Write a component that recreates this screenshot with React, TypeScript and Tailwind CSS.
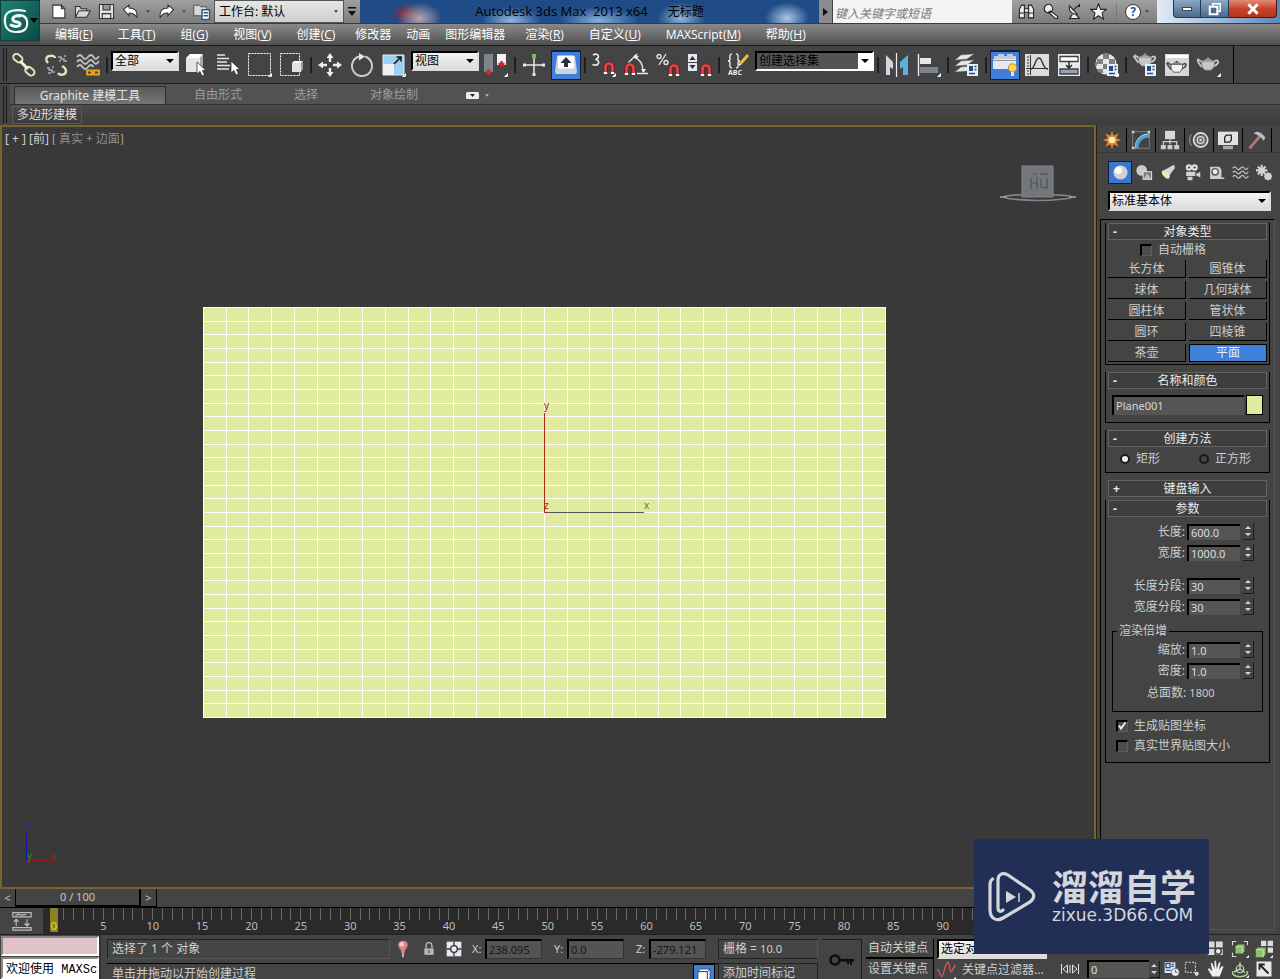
import type { ReactNode } from "react";

function Svg({ children, className = "size-6" }: { children: ReactNode; className?: string }) {
  return (
    <svg viewBox="0 0 24 24" fill="none" stroke="none" className={`shrink-0 ${className}`} aria-hidden="true">
      {children}
    </svg>
  );
}

const Corner = () => <path d="M24 20v3l-1 1h-3z" fill="#fff" />;

const Magnet = ({ x = 0, y = 0 }: { x?: number; y?: number }) => (
  <g transform={`translate(${x} ${y})`}>
    <path d="M2.500 13V6a3.500 3.500 0 0 1 7 0v7" stroke="#7d1518" strokeWidth="4.400" />
    <path d="M2.500 11V6a3.500 3.500 0 0 1 7 0v5" stroke="#e0474a" strokeWidth="2.600" />
    <path d="M.8 12h3.400M7.800 12h3.400" stroke="#fff" strokeWidth="2" />
  </g>
);

const Teapot = ({ fill = "#c4c8cb", stroke = "#8b9094" }: { fill?: string; stroke?: string }) => (
  <g fill={fill} stroke={stroke} strokeWidth="1">
    <path d="M6 10 2 7.5l-1 1L5.500 15M18 10c3-3 5-1 4 1s-3 3-5 3.500" fill="none" strokeWidth="1.8" stroke={fill === "#f3f3f3" ? stroke : fill} />
    <path d="M6 9h12c1 4 0 7-3 9H9C6 16 5 13 6 9z" />
    <path d="M7.500 9c1-2 8-2 9 0zM11 6h2v1.500h-2z" />
  </g>
);

const Dialog = () => (
  <g>
    <path d="M12 11h11v12H12z" fill="#e9eff7" />
    <path d="M14 13h4v5h-4z" fill="#244d86" />
    <path d="M19.500 13.500h2M19.500 16.500h2M14 20.500h6" stroke="#244d86" strokeWidth="1.400" />
  </g>
);

const Cursor = ({ x = 0, y = 0 }: { x?: number; y?: number }) => (
  <path transform={`translate(${x} ${y})`} d="M0 0v12l3-2.500 2 4.500 2.500-1-2-4.500H9z" fill="#fff" stroke="#333" strokeWidth=".8" />
);

const icons = {
  link: (
    <g stroke="#e8e0bd" strokeWidth="2">
      <rect x="1" y="2" width="10" height="6.500" rx="3.200" transform="rotate(40 6 5)" />
      <rect x="13" y="15" width="10" height="6.500" rx="3.200" transform="rotate(40 18 18)" />
      <path d="m8 8 8 8" stroke="#f6f1d8" strokeWidth="3" />
    </g>
  ),
  unlink: (
    <g stroke="#e8e0bd" strokeWidth="2.400">
      <path d="M4 10C1 7 2 3 6 3c3-1 5 1 5 2M14 20c2 3 8 2 8-2 0-3-2-4-4-5" />
      <path d="M14 4h3v2h3v2h3M15 8h2M20 3h2M3 15h2v2h3v2h3M4 20h3M8 14h2" stroke="#a9adb0" strokeWidth="1.500" />
    </g>
  ),
  bind: (
    <g>
      <path d="M1 4q3-4 5.500 0t5.500 0 5.500 0T23 3M1 9q3-4 5.500 0T12 9t5.500 0T23 8M1 14q3-4 5.500 0T12 14t5.500 0" stroke="#b9c0c5" strokeWidth="1.800" />
      <path d="M11 17.500h5v4h-5zM18 17.500h5v4h-5zM15 19.500h4" stroke="#f0a31f" strokeWidth="1.800" />
    </g>
  ),
  select: (
    <g>
      <path d="m2 5 4-4h13l-3 4z" fill="#fff" />
      <path d="M2 5h14v14H2z" fill="#e2e5e7" />
      <path d="m16 5 3-4v13l-3 5z" fill="#a5aaae" />
      <Cursor x={13} y={9} />
    </g>
  ),
  byName: (
    <g>
      <path d="M1 2h8M1 5.500h12M1 9h10M1 12.500h13M1 16h12" stroke="#e6e6e6" strokeWidth="1.300" />
      <Cursor x={15} y={8} />
    </g>
  ),
  rect: (
    <g>
      <path d="M.5.5h22v22H.5z" stroke="#fff" strokeDasharray="2 1" />
      <Corner />
    </g>
  ),
  window: (
    <g>
      <path d="M.5.5h19v22H.5z" stroke="#fff" strokeDasharray="2 1" />
      <path d="m12 10 2-2h9l-2 2z" fill="#fff" />
      <path d="M12 10h9v9h-9z" fill="#dfe3e6" />
      <path d="m21 10 2-2v8l-2 3z" fill="#9aa0a5" />
    </g>
  ),
  move: (
    <path
      d="m12 0 3.500 5h-2.300v4h-2.400V5H8.500zM12 24l-3.500-5h2.300v-4h2.400v4h2.300zM0 12l5-3.500v2.300h4v2.400H5v2.300zM24 12l-5 3.500v-2.300h-4v-2.400h4V8.500z"
      fill="#eee"
    />
  ),
  rotate: (
    <g>
      <path d="M9 3.500A10 10 0 1 0 15 3.500" stroke="#c9cccf" strokeWidth="2" />
      <path d="m9 0 6 3.500-6 4z" fill="#e8e8e8" />
    </g>
  ),
  scale: (
    <g>
      <path d="M1 2h21v20H1z" fill="#9cd0f0" />
      <path d="M1 2h21v20H1z" stroke="#d9effc" />
      <path d="M1 11h11v11H1z" fill="#eef0f2" />
      <path d="m12 11 7-7M14.500 4H19v4.500" stroke="#111" strokeWidth="1.500" />
      <Corner />
    </g>
  ),
  pivot: (
    <g>
      <path d="M0 1h9v18H0z" fill="#7e868d" />
      <path d="M13 1h9v11h-9z" fill="#f2f2f2" />
      <path d="M1.500 19h6M4.500 16v6M14.500 11h6M17.500 8v6" stroke="#d5252b" strokeWidth="2.400" />
      <Corner />
    </g>
  ),
  manipulate: (
    <g>
      <path d="M12 4v17M3 12h18" stroke="#e6e6e6" strokeWidth="1.500" />
      <path d="M1 10.500h3v3H1zM20 10.500h3v3h-3zM10.500 20h3v3h-3z" fill="#e6e6e6" />
      <path d="M10 1h4v4h-4z" fill="#72c04d" />
    </g>
  ),
  keyboard: (
    <g>
      <path d="M3 3h18l2 16-1 2H2l-1-2z" fill="#ccd3da" />
      <path d="M4 2.500h16v13H4z" fill="#fff" />
      <path d="m12 4 5.500 6H14v4h-4v-4H6.500z" fill="#26303c" />
    </g>
  ),
  snap: (
    <g>
      <path d="M1 2c5-3 8 3 2.500 4.500C9 7 7 14 .5 11.500" stroke="#eee" strokeWidth="1.600" />
      <Magnet x={11} y={8} />
      <Corner />
    </g>
  ),
  angle: (
    <g>
      <path d="M4 10 13 1M13 20.500h11M10 4c6 2 9 8 9 15" stroke="#e6e6e6" strokeWidth="1.400" />
      <path d="m10 2 5 1-3 3zM17 16h5l-2.500 4z" fill="#eee" />
      <Magnet x={0} y={9} />
    </g>
  ),
  percent: (
    <g>
      <circle cx="3" cy="3.500" r="2" stroke="#e6e6e6" strokeWidth="1.400" />
      <circle cx="10" cy="9.500" r="2" stroke="#e6e6e6" strokeWidth="1.400" />
      <path d="M10 1 3 12" stroke="#e6e6e6" strokeWidth="1.300" />
      <Magnet x={12} y={10} />
    </g>
  ),
  spinner: (
    <g>
      <path d="M0 1h9v8H0zM0 10h9v8H0z" fill="#e4e9ef" />
      <path d="m4.500 3 3 4h-6zM4.500 16l3-4h-6z" fill="#26303c" />
      <Magnet x={12} y={10} />
    </g>
  ),
  named: (
    <g>
      <path d="M6 1C3 1 4 4 4 6s-2 2-2 2 2 0 2 2-1 5 2 5M10 1c3 0 2 3 2 5s2 2 2 2-2 0-2 2 1 5-2 5" stroke="#e6e6e6" strokeWidth="1.400" />
      <path d="m22 2-8 9" stroke="#eebb3a" strokeWidth="3" />
      <path d="m14 10-2 3 3-1z" fill="#fff" />
      <text x="2" y="22" fill="#eee" fontSize="7" fontWeight="700">ABC</text>
    </g>
  ),
  mirror: (
    <g>
      <path d="m1 2 7 7v7l-3-2v8H1z" fill="#cfd8e0" />
      <path d="m23 2-8 7v7l3-2v8h5z" fill="#5fb0e0" />
      <path d="M11.500 0v24" stroke="#eee" strokeWidth="1.200" />
    </g>
  ),
  align: (
    <g>
      <path d="M1.500 1v22" stroke="#eee" strokeWidth="1.400" />
      <path d="M3 5h11v6H3z" fill="#e4e7ea" />
      <path d="M3 14h18v6H3z" fill="#7b8590" />
      <Corner />
    </g>
  ),
  layers: (
    <g>
      <path d="m6 2 13-1-7 5-12 1zM6 8l13-1-7 5-12 1zM6 14l13-1-7 5-12 1z" fill="#e3e6e8" stroke="#777" strokeWidth=".5" />
      <Dialog />
    </g>
  ),
  ribbon: (
    <g>
      <path d="M1 6V3h4V1h6v2h3V1h6v2h3v3z" fill="#c3ccd5" />
      <path d="M0 6h23v10H0z" fill="#e5eaef" />
      <path d="M0 7.500h23" stroke="#8995a1" />
      <circle cx="19.500" cy="15" r="4.200" fill="#ffd75c" stroke="#c98412" />
      <path d="M18 19h3v4h-3z" fill="#f3e3b5" />
    </g>
  ),
  curve: (
    <g>
      <path d="M0 1h24v22H0z" fill="#dadcde" />
      <path d="M5.500 2v20M1 15.500h22M2 4h2M2 7h2M2 10h2M2 13h2M2 18h2M2 21h2" stroke="#333" />
      <path d="M6 16c4 0 4-11 8-11s3 11 9 11" stroke="#333" strokeWidth="1.400" />
    </g>
  ),
  schematic: (
    <g>
      <path d="M1 1h22v22H1z" fill="#e8eaec" />
      <path d="M3 3.500h18v5H3z" fill="#fff" stroke="#3a4047" strokeWidth="1.300" />
      <path d="M3 16h18v5H3z" fill="#98a3ad" stroke="#3a4047" strokeWidth="1.300" />
      <path d="M12 9v6M9 12l3 3 3-3" stroke="#222" strokeWidth="1.400" />
    </g>
  ),
  material: (
    <g>
      <circle cx="11" cy="11" r="10.500" fill="#e3e5e7" />
      <path d="M8 1h6v5H8zM2 6h6v5H2zM14 6h6v5h-6zM8 11h6v5H8zM2 16h6v4H5zM0 9h2v4H0z" fill="#7b8186" />
      <Dialog />
      <Corner />
    </g>
  ),
  renderSetup: (
    <g>
      <g transform="translate(0 -5)"><Teapot /></g>
      <Dialog />
    </g>
  ),
  frame: (
    <g>
      <path d="M0 1h24v22H0z" fill="#d5d7d9" />
      <path d="M1 2h22v3H1z" fill="#fff" />
      <g transform="translate(1 3) scale(.9)"><Teapot fill="#f3f3f3" stroke="#4a4f53" /></g>
    </g>
  ),
  render: (
    <g>
      <g transform="translate(-1 -1)"><Teapot /></g>
      <Corner />
    </g>
  ),
  waves: <path d="M1 6q3-4 5.500 0t5.500 0 5.500 0T23 5M1 12q3-4 5.500 0t5.500 0 5.500 0 5.500-1M1 18q3-4 5.500 0t5.500 0 5.500 0 5.500-1" stroke="#b9c0c5" strokeWidth="1.800" />,
};

type IconName = keyof typeof icons;

function Tool({ icon, label, active }: { icon: IconName; label: string; active?: boolean }) {
  return (
    <button type="button" aria-label={label} className="flex w-8 shrink-0 items-center justify-center">
      <span className={active ? "flex size-[30px] items-center justify-center border border-t-2 border-[#15203a] bg-[#3f7edb]" : "flex size-[30px] items-center justify-center"}>
        <Svg>{icons[icon]}</Svg>
      </span>
    </button>
  );
}

const Sep = () => <span className="mx-0.5 h-4 w-0.5 shrink-0 bg-[#1f1f1f]" />;

function Select({ label, value, className, dark }: { label: string; value: string; className: string; dark?: boolean }) {
  return (
    <span className={`relative mx-px flex shrink-0 ${className}`}>
      <select
        aria-label={label}
        className={
          dark
            ? "w-full appearance-none border-2 border-t-black border-l-black border-r-white border-b-white bg-[#545454] pl-0.5 leading-4 text-black"
            : "w-full appearance-none border-2 border-t-black border-l-black border-r-[#ddd] border-b-[#ddd] bg-linear-to-b from-[#f4f4f4] to-[#dcdcdc] pl-0.5 leading-4 text-black"
        }
      >
        <option>{value}</option>
      </select>
      <span className={`pointer-events-none absolute inset-y-0.5 right-0.5 flex w-3.5 items-center justify-center ${dark ? "bg-white" : ""}`}>
        <svg viewBox="0 0 8 4" className="h-1 w-2"><path d="M0 0h8L4 4z" fill="#000" /></svg>
      </span>
    </span>
  );
}

const quick = [
  { label: "新建", d: "M4 3h12l5 5v13H4zM16 3v5h5", fill: "#fff" },
  { label: "打开", d: "M2 20V5h6l2 3h8v3M2 20l5-9h16l-5 9z", fill: "#d5d8da" },
  { label: "保存", d: "M2 2h20v20H2zM7 2v8h10V2M6 22v-7h12v7", fill: "#dfe3e8" },
  { label: "撤销", d: "M2 9l8-6v4c8 0 12 4 11 14-2-5-5-7-11-7v4z", fill: "#fff" },
  { label: "重做", d: "M22 9l-8-6v4C6 7 2 11 3 21c2-5 5-7 11-7v4z", fill: "#fff" },
];

function TitleBar() {
  return (
    <div className="flex h-6 items-stretch border-b border-[#3a3a3a] bg-linear-to-b from-[#a0a0a0] to-[#7d7d7d]">
      <div className="flex items-center pl-1.5">
        {quick.map((q, i) => (
          <span key={q.label} className="flex items-center">
            <button type="button" aria-label={q.label} className="flex w-6 items-center justify-center">
              <Svg className="size-[17px]"><path d={q.d} fill={q.fill} stroke="#333" strokeWidth="1.500" /></Svg>
            </button>
            {i > 2 && <svg viewBox="0 0 8 5" className="mx-1 h-[3px] w-1"><path d="M0 0h8L4 5z" fill="#444" /></svg>}
          </span>
        ))}
        <button type="button" aria-label="项目文件夹" className="flex w-6 items-center justify-center">
          <Svg className="size-[18px]">
            <path d="M1 3h7l2 2h8v12H1z" fill="#d5d8da" stroke="#333" />
            <path d="M12 9h10v13H12z" fill="#fff" stroke="#2d5590" strokeWidth="2" />
            <path d="M14 13h6M14 17h6" stroke="#2d5590" strokeWidth="2" />
          </Svg>
        </button>
      </div>
      <span className="relative flex w-[130px] shrink-0">
        <select aria-label="工作台" className="w-full appearance-none border border-[#555] bg-linear-to-b from-[#e6e6e6] to-[#cfcfcf] pl-1 text-black">
          <option>工作台: 默认</option>
        </select>
        <svg viewBox="0 0 8 5" className="pointer-events-none absolute top-2.5 right-1.5 h-[3px] w-1"><path d="M0 0h8L4 5z" fill="#333" /></svg>
      </span>
      <button type="button" aria-label="自定义快速访问工具栏" className="flex w-4 shrink-0 items-center justify-center">
        <svg viewBox="0 0 8 9" className="h-[9px] w-2"><path d="M0 0h8v1.500H0zM0 4h8L4 9z" fill="#111" /></svg>
      </button>
      <h1 className="flex flex-1 items-center justify-center overflow-hidden bg-[radial-gradient(ellipse_22px_16px_at_13%_80%,#b9a4ae,transparent),radial-gradient(ellipse_16px_10px_at_10%_60%,#8a2b33,transparent),radial-gradient(ellipse_30px_14px_at_33%_90%,#93b6dd,transparent),radial-gradient(ellipse_40px_14px_at_52%_90%,#86aedb,transparent),radial-gradient(ellipse_24px_16px_at_70%_80%,#8fb5d8,transparent),radial-gradient(ellipse_22px_16px_at_93%_80%,#a9c6e6,transparent)] bg-[#1f4c87] font-['Open_Sans','Noto_Sans_CJK_SC',sans-serif] whitespace-pre text-black">
        <span className="text-[13px]">Autodesk 3ds Max  2013 x64</span>
        <span className="ml-5">无标题</span>
      </h1>
      <button type="button" aria-label="展开" className="flex w-3.5 shrink-0 items-center justify-center border-r border-[#444] bg-[#8b8b8b]">
        <svg viewBox="0 0 5 8" className="h-2 w-[5px]"><path d="M0 0v8l5-4z" fill="#111" /></svg>
      </button>
      <input aria-label="搜索" placeholder="键入关键字或短语" className="w-[179px] shrink-0 bg-[#f4f4f4] pt-1 pl-0.5 italic placeholder:text-[#777]" />
      <div className="flex shrink-0 items-center pr-1.5 pl-0.5">
        {infoIcons.map((i) => (
          <button key={i.label} type="button" aria-label={i.label} className="flex w-6 items-center justify-center">
            <Svg className="size-[17px]">{i.icon}</Svg>
          </button>
        ))}
        <span className="mx-1.5 h-4 w-px bg-[#777]" />
        <button type="button" aria-label="帮助" className="flex w-7 items-center justify-center gap-1">
          <span className="flex size-4 shrink-0 items-center justify-center rounded-full border border-[#333] bg-white text-[12px] leading-3 font-bold text-[#2455b5]">?</span>
          <svg viewBox="0 0 8 5" className="h-[3px] w-1"><path d="M0 0h8L4 5z" fill="#444" /></svg>
        </button>
      </div>
      <div className="flex shrink-0 items-start bg-linear-to-r from-[#e3ecf6] to-[#5c88b8] pr-[3px] pl-4">
        <button type="button" aria-label="最小化" className="flex h-[18px] w-7 items-center justify-center rounded-bl border border-t-0 border-[#26384e] bg-linear-to-b from-[#8ba8c6] to-[#4b6b8f]">
          <span className="h-1 w-2.5 border border-[#444] bg-white" />
        </button>
        <button type="button" aria-label="还原" className="flex h-[18px] w-7 items-center justify-center border border-t-0 border-l-0 border-[#26384e] bg-linear-to-b from-[#8ba8c6] to-[#4b6b8f]">
          <Svg className="size-3.5"><path d="M8 3h13v13H8z" stroke="#fff" strokeWidth="2.500" /><path d="M3 8h13v13H3z" fill="#4b6b8f" stroke="#fff" strokeWidth="3.500" /></Svg>
        </button>
        <button type="button" aria-label="关闭" className="flex h-[18px] w-12 items-center justify-center rounded-br border border-t-0 border-l-0 border-[#4a1710] bg-linear-to-b from-[#e08a77] via-[#c8432b] to-[#b8321c]">
          <Svg className="size-3.5"><path d="m4 4 16 16M20 4 4 20" stroke="#fff" strokeWidth="5" /></Svg>
        </button>
      </div>
    </div>
  );
}

const infoIcons = [
  { label: "搜索", icon: <path d="M2 21V9l3-6h4v18zM15 21V3h4l3 6v12zM9 8h6v5H9zM2 14h7M15 14h7" fill="#eee" stroke="#222" strokeWidth="1.500" /> },
  { label: "速博应用", icon: <path d="M8 2a6 6 0 1 1-2 11 6 6 0 0 1 2-11zM12 11l10 8v3h-3L9 13z" fill="#eee" stroke="#222" strokeWidth="1.500" /> },
  { label: "通讯中心", icon: <path d="M5 4c-2 7 4 13 11 12zM5 4l11 12M10 10l8-7M19 1v4h-4M9 16l-4 6h14l-5-6" fill="#eee" stroke="#222" strokeWidth="1.500" /> },
  { label: "收藏夹", icon: <path d="m12 1 3 8h8l-6 5 2 9-7-5-7 5 2-9-6-5h8z" fill="#f5f5f5" stroke="#222" strokeWidth="1.500" /> },
];

const menus = [
  ["编辑", "E"], ["工具", "T"], ["组", "G"], ["视图", "V"], ["创建", "C"], ["修改器"], ["动画"],
  ["图形编辑器"], ["渲染", "R"], ["自定义", "U"], ["MAXScript", "M"], ["帮助", "H"],
];

function Header() {
  return (
    <header className="flex h-[45px] shrink-0 bg-[#4a4a4a]">
      <button type="button" aria-label="应用程序" className="flex h-[41px] w-10 shrink-0 items-center border border-[#123f3a] bg-linear-to-br from-[#1d8276] to-[#0b4a46]">
        <svg viewBox="0 0 28 28" fill="none" stroke="#f2f7f6" strokeLinecap="round" className="ml-px size-7 shrink-0">
          <path d="M23 4C14 2 4 3 3 11c-1 9 3 14 11 14 9 0 12-4 11-11-1-5-6-7-11-5" strokeWidth="2.200" />
          <path d="M18 9c-4-1-8 1-7 4s7 1 7 4-6 3-9 1" strokeWidth="3" />
        </svg>
        <svg viewBox="0 0 8 5" className="h-[5px] w-2 shrink-0"><path d="M0 0h8L4 5z" fill="#000" /></svg>
      </button>
      <div className="min-w-0 flex-1">
        <TitleBar />
        <nav className="flex h-[21px] items-center gap-px bg-linear-to-b from-[#8a8a8a] to-[#505050] pl-[3px] font-['Open_Sans','Noto_Sans_CJK_SC',sans-serif] text-white">
          {menus.map(([name, key]) => (
            <button key={name} type="button" className={key ? "px-3" : "px-[7px]"}>
              {name}
              {key && <>(<u>{key}</u>)</>}
            </button>
          ))}
        </nav>
      </div>
    </header>
  );
}

function Toolbar() {
  return (
    <div className="h-[39px] shrink-0 border-y border-[#1c1c1c] bg-[#444]">
      <div className="flex h-full w-[1234px] items-center border-r border-black">
        <Grip className="mr-px" />
        <Tool icon="link" label="选择并链接" />
        <Tool icon="unlink" label="断开当前选择链接" />
        <Tool icon="bind" label="绑定到空间扭曲" />
        <Sep />
        <Select label="选择过滤器" value="全部" className="mb-2 h-5 w-[68px]" />
        <Tool icon="select" label="选择对象" />
        <Tool icon="byName" label="按名称选择" />
        <Tool icon="rect" label="矩形选择区域" />
        <Tool icon="window" label="窗口/交叉" />
        <Sep />
        <Tool icon="move" label="选择并移动" />
        <Tool icon="rotate" label="选择并旋转" />
        <Tool icon="scale" label="选择并缩放" />
        <Select label="参考坐标系" value="视图" className="mb-2 h-5 w-[68px]" />
        <Tool icon="pivot" label="使用轴点中心" />
        <Sep />
        <Tool icon="manipulate" label="选择并操纵" />
        <Tool icon="keyboard" label="键盘快捷键覆盖切换" active />
        <Sep />
        <Tool icon="snap" label="捕捉开关" />
        <Tool icon="angle" label="角度捕捉切换" />
        <Tool icon="percent" label="百分比捕捉切换" />
        <Tool icon="spinner" label="微调器捕捉切换" />
        <Sep />
        <Tool icon="named" label="编辑命名选择集" />
        <Select label="命名选择集" value="创建选择集" className="mb-2 h-5 w-[119px]" dark />
        <Sep />
        <Tool icon="mirror" label="镜像" />
        <Tool icon="align" label="对齐" />
        <Sep />
        <Tool icon="layers" label="层管理器" />
        <Sep />
        <Tool icon="ribbon" label="Graphite 建模工具" active />
        <Tool icon="curve" label="曲线编辑器" />
        <Tool icon="schematic" label="图解视图" />
        <Sep />
        <Tool icon="material" label="材质编辑器" />
        <Sep />
        <Tool icon="renderSetup" label="渲染设置" />
        <Tool icon="frame" label="渲染帧窗口" />
        <Tool icon="render" label="渲染产品" />
      </div>
    </div>
  );
}

const Grip = ({ className }: { className: string }) => (
  <span className={`my-0.5 ml-[3px] flex w-1 shrink-0 self-stretch border-x border-[#161616] ${className}`} />
);

function Ribbon() {
  return (
    <div className="flex h-[41px] shrink-0 bg-[#444]">
      <Grip className="mr-[3px]" />
      <div className="flex min-w-0 flex-1 flex-col">
        <div className="flex h-[21px] items-end border-b border-[#333] bg-[#525252] text-[#9c9c9c]">
          <button type="button" className="ml-1 h-[18px] w-[152px] border border-b-0 border-[#2d2d2d] bg-linear-to-b from-[#5a5a5a] to-[#757575] leading-4 text-[#e2e2e2]">
            Graphite 建模工具
          </button>
          <button type="button" className="ml-1 w-24 pb-px leading-4">自由形式</button>
          <button type="button" className="w-20 pb-px leading-4">选择</button>
          <button type="button" className="w-24 pb-px leading-4">对象绘制</button>
          <button type="button" aria-label="最小化功能区" className="ml-6 flex h-[18px] items-center gap-1.5">
            <svg viewBox="0 0 13 7" className="h-[7px] w-[13px]"><rect width="13" height="7" rx="1.500" fill="#eee" /><path d="M4 2h5L6.500 5z" fill="#222" /></svg>
            <svg viewBox="0 0 8 5" className="h-[3px] w-1"><path d="M0 0h8L4 5z" fill="#bbb" /></svg>
          </button>
        </div>
        <div className="flex flex-1 items-center bg-linear-to-b from-[#4b4b4b] to-[#3c3c3c]">
          <button type="button" className="ml-0.5 h-[18px] border border-[#5a5a5a] px-1 leading-4 text-[#dedede]">多边形建模</button>
        </div>
      </div>
    </div>
  );
}

function Plane() {
  const steps = Array.from({ length: 31 }, (_, i) => i);
  return (
    <svg viewBox="0 0 683 411" className="h-[411px] w-[683px] shrink-0">
      <rect width="683" height="411" fill="#e0eb9f" />
      <g fill="#fff">
        {steps.map((i) => (
          <path key={i} d={`M${Math.round((i * 682) / 30)} 0h1v411h-1zM0 ${Math.round((i * 410) / 30)}h683v1H0z`} />
        ))}
      </g>
      <path d="M341 205h100v1H341z" fill="#555" />
      <path d="M341 106h1v100h-1z" fill="#b32615" />
      <g fontSize="10">
        <text x="341" y="102" fill="#b32615">y</text>
        <text x="441" y="202" fill="#6b6f4c">x</text>
        <text x="341" y="202" fill="#b32615">z</text>
      </g>
    </svg>
  );
}

function Viewport() {
  return (
    <section aria-label="前视图" className="relative flex min-h-0 flex-1 items-center justify-center overflow-hidden border-2 border-[#766629] bg-[#393939] pt-[11px] pr-[7px]">
      <Plane />
      <div className="absolute top-1 left-[3px] flex gap-[3px] leading-4 text-[#d2d2d2]">
        <button type="button">[ + ]</button>
        <button type="button">[前]</button>
        <button type="button" className="font-['Liberation_Serif','Noto_Sans_CJK_SC',serif] font-light text-[#b0b0b0]">[ 真实 + 边面]</button>
      </div>
      <svg viewBox="0 0 76 40" className="absolute top-[37px] right-[18px] h-10 w-[76px]">
        <path d="M38 30.500c-18 0-34 1-34 2.500s18 3.500 34 3.500 34-2 34-3.500-16-2.500-34-2.500" fill="none" stroke="#85878a" strokeWidth="1.600" />
        <path d="M0 33h7M69 33h7" stroke="#a5a7aa" strokeWidth="1.500" />
        <rect x="22" y="2" width="31" height="31" fill="#73767b" stroke="#85888d" />
        <path d="M31 14v11M31 19h6M37 13v12M41 15v8l6 1v-10M33 10h4M40 10h8" stroke="#555a62" strokeWidth="1.500" fill="none" />
      </svg>
      <svg viewBox="0 0 44 48" className="absolute bottom-[22px] left-5 h-12 w-11 overflow-visible">
        <path d="M4 16h1v28H4z" fill="#1512a5" />
        <path d="M6 43h25v1H6z" fill="#961b1b" />
        <text x="4" y="13" fontSize="10" fill="#2a25c5">z</text>
        <text x="5" y="42" fontSize="10" fill="#1d8c1d">y</text>
        <text x="29" y="43" fontSize="10" fill="#a31c1c">x</text>
      </svg>
    </section>
  );
}

function Timeline() {
  return (
    <>
      <div className="flex h-[19px] shrink-0 border-b border-black bg-[#444] text-[11px] leading-4 text-[#c4c4c4]">
        <button type="button" className="w-4 border-r border-black text-center">&lt;</button>
        <button type="button" className="w-[125px] border-r-2 border-b-2 border-black">0 / 100</button>
        <button type="button" className="w-4 border-r border-b border-black text-center">&gt;</button>
      </div>
      <div className="flex h-[26px] shrink-0 bg-[#2a2a2a]">
        <button type="button" aria-label="打开迷你曲线编辑器" className="flex w-[43px] shrink-0 items-center justify-center bg-[#444]">
          <Svg className="size-5">
            <path d="M1 2h22v5H1zM1 20h22v3H1zM5 18v-7M2 13l3-3 3 3M18 10v7M15 15l3 3 3-3M4 5l4-1 4 1 5-1" stroke="#bdbdbd" strokeWidth="1.400" />
          </Svg>
        </button>
        <div className="flex min-w-0 flex-1 pr-[49px] pl-[6px] text-[11px] leading-3 text-[#bdbdbd]">
          {Array.from({ length: 101 }, (_, f) => (
            <div key={f} className="flex min-w-0 flex-1 flex-col items-center">
              {f === 0 ? (
                <span className="flex h-6 w-2 items-end justify-center bg-[#88821f] text-[#e8e04a]">0</span>
              ) : (
                <>
                  <span className="h-3 w-px shrink-0 bg-[#686868]" />
                  {f % 5 === 0 && <span className="whitespace-nowrap">{f}</span>}
                </>
              )}
            </div>
          ))}
        </div>
      </div>
    </>
  );
}

const tabs = [
  { label: "创建", icon: <><path d="m12 1 2 6 6-3-3 6 6 2-6 2 3 6-6-3-2 6-2-6-6 3 3-6-6-2 6-2-3-6 6 3z" fill="#e8892c" /><circle cx="12" cy="12" r="4" fill="#fff0b0" /></> },
  { label: "修改", icon: <><path d="M2 2h20v20H2z" stroke="#888" /><path d="M5 22C5 12 12 5 22 5" stroke="#cde9fb" strokeWidth="1.500" /><path d="M7 22C7 13 13 7 22 7" stroke="#4f9fd8" strokeWidth="4" /><path d="M1 1h3v3H1zM20 1h3v3h-3zM1 20h3v3H1z" fill="#ccc" /></> },
  { label: "层次", icon: <><path d="M6 1h12v10H6z" fill="#d5d7d9" /><path d="M12 11v6M12 14H4v4M12 14h8v4" stroke="#ccc" strokeWidth="1.500" /><path d="M1 18h6v5H1zM9 18h6v5H9zM17 18h6v5h-6z" fill="#ccc" /></> },
  { label: "运动", icon: <><circle cx="14" cy="12" r="8.500" fill="#60666b" stroke="#ddd" strokeWidth="2" /><circle cx="14" cy="12" r="4" stroke="#ddd" strokeWidth="1.500" /><circle cx="14" cy="12" r="1.500" fill="#ddd" /><path d="M3 5c-3 4-3 10 0 14" stroke="#888" strokeWidth="1.500" /></> },
  { label: "显示", icon: <><path d="M0 2h24v16H0z" fill="#e2e2e2" /><path d="M6 19h12v4H6z" fill="#aaa" /><path d="M8 8.500 10 6h6v6l-2 2.500H8z" stroke="#222" strokeWidth="1.500" /></> },
  { label: "实用程序", icon: <><path d="M3 22 15 8" stroke="#b07a70" strokeWidth="3.500" /><path d="M8 4c4-4 9-2 14 5l-2 4c-3-4-6-7-12-9z" fill="#b9bdc0" /></> },
];

const categories = [
  { label: "几何体", icon: <><circle cx="12" cy="12" r="10" fill="#cfd2d4" /><circle cx="9" cy="9" r="5" fill="#fff" /></> },
  { label: "图形", icon: <><circle cx="8" cy="9" r="7.500" fill="#c9ccce" /><path d="M10 11h12v11H10z" fill="#777b7e" stroke="#ddd" strokeWidth="1.500" /><path d="m10 22 6-9 6 9z" fill="#bbb" /></> },
  { label: "灯光", icon: <><path d="M20 1C13 4 8 8 3 10l9 10c2-5 5-10 9-14z" fill="#d4d6d7" /><ellipse cx="8" cy="15" rx="3.500" ry="7" transform="rotate(-42 8 15)" fill="#f5e6b2" /></> },
  { label: "摄影机", icon: <><circle cx="7" cy="5" r="4.500" fill="#ddd" /><circle cx="15" cy="5" r="4.500" fill="#ddd" /><circle cx="7" cy="5" r="1.500" fill="#444" /><circle cx="15" cy="5" r="1.500" fill="#444" /><path d="M3 11h13v6H3zM17 14l6-3v8l-6-3zM5 18h7v5H5z" fill="#d0d2d4" /></> },
  { label: "辅助对象", icon: <><path d="M3 4h13l3 4v11h4v2H3z" fill="#cdd0d2" /><circle cx="10" cy="11" r="4.500" fill="#eee" stroke="#555" strokeWidth="2" /></> },
  { label: "空间扭曲", icon: icons.waves },
  { label: "系统", icon: <path d="M8 1v16M0 9h16M2.500 3.500l11 11M13.500 3.500l-11 11M17 12v11M11.500 17.500h11M13 13.500l8 8M21 13.500l-8 8" stroke="#d4d4d4" strokeWidth="3" /> },
];

function Rollout({ title, open = true, className = "", children }: { title: string; open?: boolean; className?: string; children?: ReactNode }) {
  return (
    <section className={open ? "relative shrink-0 border border-black border-t-0 px-0.5 pb-0.5" : "relative shrink-0 px-[3px]"}>
      <button type="button" aria-expanded={open} className="flex h-[17px] w-full items-center border border-[#636363] bg-[#3e3e3e] px-1 leading-4 text-[#ececec]">
        <span className="w-3 text-left font-bold">{open ? "-" : "+"}</span>
        <span className="flex-1 pr-3 text-center">{title}</span>
      </button>
      <div className={className}>{children}</div>
    </section>
  );
}

function Arrows() {
  return (
    <button type="button" aria-label="微调" className="flex h-[17px] w-[11px] shrink-0 items-center justify-center border-r border-b border-[#1c1c1c]">
      <svg viewBox="0 0 6 12" className="h-3 w-1.5"><path d="M0 4h6L3 1zM0 8h6l-3 3z" fill="#d5d5d5" /></svg>
    </button>
  );
}

function Field({ label, value }: { label: string; value: string }) {
  return (
    <div className="flex h-[21px] items-center">
      <label htmlFor={label} className="flex-1 pr-0.5 text-right">{label}:</label>
      <input id={label} defaultValue={value} className="h-4 w-[53px] border-t-2 border-l-2 border-black bg-[#555] pl-0.5 text-[11px] leading-3 text-[#ddd]" />
      <span className="ml-[3px] flex"><Arrows /></span>
    </div>
  );
}

function Check({ label, checked }: { label: string; checked?: boolean }) {
  return (
    <label className="flex h-5 items-center gap-1.5">
      <span className="relative flex size-3">
        <input type="checkbox" defaultChecked={checked} className="size-3 appearance-none border-t-2 border-l-2 border-r border-b border-t-black border-l-black border-r-[#5c5c5c] border-b-[#5c5c5c] bg-[#4c4c4c]" />
        {checked && <Svg className="pointer-events-none absolute inset-0 size-3"><path d="m6 11 4 6 9-12" stroke="#eee" strokeWidth="4" /></Svg>}
      </span>
      {label}
    </label>
  );
}

function Radio({ label, checked }: { label: string; checked?: boolean }) {
  return (
    <label className="flex items-center gap-1.5">
      <input type="radio" name="method" defaultChecked={checked} className="size-2.5 appearance-none rounded-full border-2 border-[#1a1a1a] bg-[#444] checked:bg-[#f0f0f0]" />
      {label}
    </label>
  );
}

const primitives = ["长方体", "圆锥体", "球体", "几何球体", "圆柱体", "管状体", "圆环", "四棱锥", "茶壶", "平面"];

function CommandPanel() {
  return (
    <aside className="flex w-[184px] shrink-0 flex-col border-l border-[#222] bg-[#444] text-[#cdcdcd]">
      <div className="flex h-7 items-end border-b border-[#383838] pl-px">
        {tabs.map((t) => (
          <button key={t.label} type="button" aria-label={t.label} className="flex h-6 w-[29px] items-center justify-center border-r border-black">
            <Svg className="size-5">{t.icon}</Svg>
          </button>
        ))}
      </div>
      <div className="mt-2 flex pl-[11px]">
        {categories.map((c, i) => (
          <button key={c.label} type="button" aria-label={c.label} className={i === 0 ? "flex h-[23px] w-6 items-center justify-center border border-[#111c33] bg-[#3a77cf]" : "flex h-[23px] w-6 items-center justify-center"}>
            <Svg className="size-[17px]">{c.icon}</Svg>
          </button>
        ))}
      </div>
      <div className="mt-[7px] flex pr-2 pl-2.5">
        <Select label="类别" value="标准基本体" className="h-5 flex-1" />
      </div>
      <div className="mt-2 mr-[5px] mb-1 ml-[3px] flex min-h-0 flex-1 flex-col gap-[7px] border-t border-r border-b border-l border-t-black border-r-[#555] border-b-[#555] border-l-black pt-[3px] pr-1 pl-1">
        <Rollout title="对象类型">
          <div className="flex pl-8"><Check label="自动栅格" /></div>
          <div className="grid grid-cols-2 gap-[3px]">
            {primitives.map((p) => (
              <button
                key={p}
                type="button"
                className={
                  p === "平面"
                    ? "h-[18px] border border-black bg-[#3f80db] leading-4 text-[#e8eef8]"
                    : "h-[18px] border-r border-b border-black leading-4"
                }
              >
                {p}
              </button>
            ))}
          </div>
        </Rollout>
        <Rollout title="名称和颜色" className="flex h-[31px] items-center justify-between px-1">
          <input aria-label="名称" defaultValue="Plane001" className="h-5 w-[132px] border-t-2 border-l-2 border-black bg-[#555] pl-0.5 text-[11px] text-[#d5d5d5]" />
          <button type="button" aria-label="颜色" className="h-5 w-[17px] border border-black bg-[#e0eb9f]" />
        </Rollout>
        <Rollout title="创建方法" className="flex h-[23px] items-center gap-[39px] pl-3">
          <Radio label="矩形" checked />
          <Radio label="正方形" />
        </Rollout>
        <div className="flex flex-col gap-[3px]">
          <Rollout title="键盘输入" open={false} />
          <Rollout title="参数" className="px-1 pt-1 pb-1">
            <div className="pr-[9px]">
              <Field label="长度" value="600.0" />
              <Field label="宽度" value="1000.0" />
              <div className="mt-3">
                <Field label="长度分段" value="30" />
                <Field label="宽度分段" value="30" />
              </div>
            </div>
            <fieldset className="mt-1.5 h-[89px] border border-black pr-2">
              <legend className="ml-1 px-0.5 leading-4">渲染倍增</legend>
              <Field label="缩放" value="1.0" />
              <Field label="密度" value="1.0" />
              <p className="pt-1 pl-[34px] leading-4">总面数: <span className="text-[11px]">1800</span></p>
            </fieldset>
            <div className="pt-1 pl-1">
              <Check label="生成贴图坐标" checked />
              <Check label="真实世界贴图大小" />
            </div>
          </Rollout>
        </div>
      </div>
    </aside>
  );
}

function Coord({ axis, value }: { axis: string; value: string }) {
  return (
    <span className="flex w-[82px] items-center">
      <label htmlFor={axis} className="w-[13px] text-[11px]">{axis}:</label>
      <input id={axis} defaultValue={value} className="h-5 w-[57px] border-t-2 border-l-2 border-r border-b border-t-black border-l-black border-r-[#333] border-b-[#333] bg-[#545454] pl-0.5 text-[11px] text-[#161616]" />
    </span>
  );
}

const navIcons = [
  { label: "缩放所有视图", icon: <><path d="M1 2h9v8H1zM12 2h9v8h-9zM1 12h9v8H1zM12 12h9v8h-9z" fill="#d8dbdd" /><circle cx="15" cy="15" r="4" stroke="#444" strokeWidth="2" fill="#eee" /></> },
  { label: "最大化显示", icon: <><path d="M2 7V2h5M17 2h5v5M2 17v5h5" stroke="#ddd" strokeWidth="1.500" /><path d="M6 9l3-3h9v9l-3 3H6z" fill="#8cc06a" /><path d="M6 9h9v9" stroke="#d4efc2" /><Corner /></> },
  { label: "所有视图最大化显示", icon: <><path d="M8 1h7v7H8zM17 1h7v7h-7zM17 10h7v7h-7z" fill="#ddd" /><path d="M1 13l3-3h10v9l-3 4H1z" fill="#8cc06a" /><path d="M1 13h10v10" stroke="#d4efc2" /><Corner /></> },
  { label: "平移视图", icon: <path d="M7 22 1 12l2-1 4 4L5 4h2l3 8V1h2l1 11 3-9h2l-2 10 4-5 2 1-5 13z" fill="#eee" /> },
  { label: "环绕", icon: <><path d="M3 15a10 5 0 1 0 18 0M12 12V3M12 12l7 5M12 12l-8 4" stroke="#a9d48a" strokeWidth="2" /><circle cx="12" cy="12" r="5" stroke="#ddd" strokeWidth="1.500" /><Corner /></> },
  { label: "最大化视口切换", icon: <><path d="M2 2h20v20H2z" fill="#e8e8e8" /><path d="m18 18-11-11M6 13V6h7" stroke="#222" strokeWidth="2.500" /></> },
];

function NavButton({ i }: { i: number }) {
  return (
    <button type="button" aria-label={navIcons[i].label} className="flex w-6 items-center justify-center">
      <Svg className="size-[18px]">{navIcons[i].icon}</Svg>
    </button>
  );
}

function StatusBar() {
  return (
    <footer className="flex h-[45px] shrink-0 overflow-hidden border-t border-[#222] bg-[#444] leading-[18px] text-[#cfcfcf]">
      <div className="flex w-[101px] shrink-0 flex-col gap-px border-r-2 border-[#333] pt-px pl-px">
        <div className="h-[22px] border-2 border-t-[#888] border-l-[#888] border-r-white border-b-white bg-[#dfc3c6]" />
        <input aria-label="MAXScript 侦听器" defaultValue="欢迎使用 MAXScript" className="h-6 border-2 border-t-[#888] border-l-[#888] border-white bg-white pl-[3px] font-['Liberation_Mono','Noto_Sans_CJK_SC',monospace] text-black" />
      </div>
      <div className="ml-[6px] min-w-0 flex-1">
        <div className="flex h-6 items-center pt-1">
          <p className="h-5 min-w-0 flex-1 border border-[#222] border-r-[#555] border-b-[#555] pl-1">选择了 1 个 对象</p>
          <button type="button" aria-label="孤立当前选择" className="w-[26px] pl-1">
            <Svg className="size-[18px]"><path d="M12 14v9" stroke="#ddd" strokeWidth="2" /><path d="M12 1c8 0 8 8 3 12l-1 5h-4l-1-5C4 9 4 1 12 1z" fill="#d9808a" /><circle cx="10.500" cy="6" r="3" fill="#f7cdd0" /></Svg>
          </button>
          <button type="button" aria-label="选择锁定切换" className="w-[26px] pl-1.5">
            <Svg className="size-3.5"><path d="M4 11h16v11H4z" fill="#b5b5b5" /><path d="M7 11V6a5 5 0 0 1 10 0v5" stroke="#b5b5b5" strokeWidth="2.500" /><path d="M12 14v5" stroke="#444" strokeWidth="2" /></Svg>
          </button>
          <button type="button" aria-label="绝对模式变换输入" className="w-[30px] pl-1">
            <Svg className="size-4"><path d="M1 1h22v22H1z" fill="#e6e9ee" /><circle cx="12" cy="12" r="5" stroke="#333" strokeWidth="2" /><path d="M12 1v6M12 17v6M1 12h6M17 12h6" stroke="#333" strokeWidth="2" /></Svg>
          </button>
          <Coord axis="X" value="238.095" />
          <Coord axis="Y" value="0.0" />
          <Coord axis="Z" value="-279.121" />
        </div>
        <div className="mt-1 flex h-6 border-t border-black">
          <p className="flex-1 pt-px pl-[5px]">单击并拖动以开始创建过程</p>
          <button type="button" aria-label="自适应降级" className="mr-[3px] flex w-[22px] items-start justify-center border border-black bg-[#3f80db] pt-0.5">
            <Svg className="size-4"><path d="m3 7 4-4h14v13l-4 5H3z" fill="#fff" stroke="#333" /><path d="M3 7h14v14M17 7l4-4" stroke="#333" strokeWidth="1.500" /></Svg>
          </button>
        </div>
      </div>
      <div className="w-[100px] shrink-0 pt-1">
        <p className="h-5 border border-[#222] border-r-[#555] pl-1">栅格 = <span className="text-[11px]">10.0</span></p>
        <p className="mt-1 h-5 border border-[#222] pl-1">添加时间标记</p>
      </div>
      <button type="button" aria-label="设置关键点" className="mx-1 mt-1 flex w-10 shrink-0 items-center justify-center border-t border-r border-[#1c1c1c]">
        <svg viewBox="0 0 26 12" className="h-3 w-[26px]"><circle cx="6" cy="6" r="4.500" fill="none" stroke="#0c0c0c" strokeWidth="2.500" /><path d="M11 5h14v2.500h-2V11h-2V7.500h-1V10h-2V7.500h-7z" fill="#0c0c0c" /></svg>
      </button>
      <div className="flex w-[68px] shrink-0 flex-col pt-1">
        <button type="button" className="h-[21px] border-r border-b-2 border-black pl-0.5 text-left whitespace-nowrap">自动关键点</button>
        <button type="button" className="h-[21px] border-r border-black pl-0.5 text-left whitespace-nowrap">设置关键点</button>
      </div>
      <div className="ml-0.5 w-[113px] shrink-0 pt-1">
        <Select label="关键点集合" value="选定对象" className="h-5 w-[110px]" />
        <button type="button" className="flex h-5 items-center gap-1.5 pt-0.5 whitespace-nowrap">
          <Svg className="size-5"><path d="M1 11c3 0 4 9 6 9S11 3 14 3s2 11 4 11 3-5 5-8" stroke="#d65353" strokeWidth="1.800" /><Corner /></Svg>
          关键点过滤器...
        </button>
      </div>
      <div className="flex w-[112px] shrink-0 items-end pb-px">
        <button type="button" aria-label="关键点模式切换" className="mr-1.5 ml-3 w-5">
          <svg viewBox="0 0 18 10" className="mb-1 h-2.5 w-[18px]"><path d="M.5 0v10M17.500 0v10M6.500 1 2 5l4.500 4zM11.500 1 16 5l-4.500 4zM9 1v8" stroke="#e5e5e5" fill="none" /></svg>
        </button>
        <input aria-label="当前帧" defaultValue="0" className="h-[18px] w-[62px] border-t-2 border-l-2 border-black bg-[#555] pl-0.5 text-[11px] text-[#ddd]" />
        <Arrows />
      </div>
      <div className="flex w-[119px] shrink-0 flex-col pt-1 pr-1">
        <div className="flex h-5 justify-end"><NavButton i={0} /><NavButton i={1} /><NavButton i={2} /></div>
        <div className="flex h-[22px] justify-end">
          <button type="button" aria-label="时间配置" className="w-5">
            <Svg className="size-4"><path d="M1 2h16v16H1z" fill="#dfe7f2" /><path d="M3 4h6v6H3zM11 5h4M11 8h4M3 14h7" stroke="#2d5590" strokeWidth="2" /><circle cx="17" cy="17" r="6" fill="#eee" stroke="#444" /><path d="M17 13v4h3" stroke="#222" /></Svg>
          </button>
          <button type="button" aria-label="缩放区域" className="w-5">
            <Svg className="size-4"><path d="M2 2h15v15H2z" stroke="#ddd" strokeWidth="1.500" strokeDasharray="3 2" /><circle cx="19" cy="19" r="3" fill="#ddd" /></Svg>
          </button>
          <NavButton i={3} /><NavButton i={4} /><NavButton i={5} />
        </div>
      </div>
    </footer>
  );
}

function Watermark() {
  return (
    <div className="absolute right-[71px] bottom-[25px] flex h-[115px] w-[235px] items-center bg-[#212f57] pl-3.5 text-[#d4d6dc]">
      <svg viewBox="0 0 48 50" fill="none" stroke="#d4d6dc" strokeLinecap="round" className="h-[50px] w-12 shrink-0">
        <path d="M4.500 7C3 8 2 10 2 13v25c0 8 6 12 13 8l27-16c5-4 5-8 0-12L20 3c-5-3-10-1-10 5v28c0 4 3 4 5 2" strokeWidth="3.200" />
        <path d="m18 19 10 6-10 6z" fill="#d4d6dc" stroke="none" />
        <path d="M31 21v9" strokeWidth="1.500" strokeLinecap="butt" />
      </svg>
      <div className="ml-4 pb-1">
        <p className="font-['Noto_Sans_CJK_SC',sans-serif] text-[36px] leading-9 font-bold whitespace-nowrap">溜溜自学</p>
        <p className="mt-1 font-['DejaVu_Sans',sans-serif] text-[17px] leading-4 whitespace-nowrap">zixue.3D66.COM</p>
      </div>
    </div>
  );
}

export default function App() {
  return (
    <div className="relative flex h-screen flex-col overflow-hidden bg-[#444] font-['Noto_Sans','Noto_Sans_CJK_SC',sans-serif] text-[12px] select-none">
      <Header />
      <Toolbar />
      <Ribbon />
      <main className="flex min-h-0 flex-1">
        <div className="flex min-w-0 flex-1 flex-col">
          <Viewport />
          <Timeline />
        </div>
        <CommandPanel />
      </main>
      <StatusBar />
      <Watermark />
    </div>
  );
}
